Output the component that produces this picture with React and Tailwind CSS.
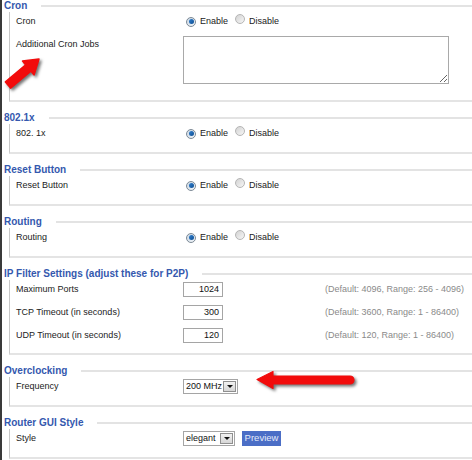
import React from "react";

// Router admin page: fieldset-style sections with legends, radios and inputs

const Radio = ({ checked }) =>
  checked ? (
    <span className="inline-flex h-[10px] w-[10px] shrink-0 items-center justify-center rounded-full border border-[#7d8a96] bg-gradient-to-br from-[#c9d6e3] to-[#f4f7fa]">
      <span className="h-[5px] w-[5px] rounded-full bg-gradient-to-br from-[#2f7fd0] to-[#0f4f92]" />
    </span>
  ) : (
    <span className="inline-flex h-[10px] w-[10px] shrink-0 rounded-full border border-[#b5b5b5] bg-gradient-to-br from-[#d2d2d2] to-[#f7f7f7]" />
  );

const EnableDisable = () => (
  <div className="flex items-center">
    <span className="ml-[3px]">
      <Radio checked />
    </span>
    <span className="ml-[4px]">Enable</span>
    <span className="ml-[7px]">
      <Radio />
    </span>
    <span className="ml-[4px]">Disable</span>
  </div>
);

const Select = ({ value, className }) => (
  <div
    className={`flex h-[15px] items-center justify-between border border-[#a5a5a5] bg-white pl-[2px] pr-[1px] ${className}`}
  >
    <span className="leading-none text-[#111]">{value}</span>
    <span className="flex h-[11px] w-[13px] items-center justify-center border border-[#8f8f8f] bg-gradient-to-b from-[#f2f2f2] to-[#d6d6d6]">
      <span className="h-0 w-0 border-x-[3px] border-t-[3px] border-x-transparent border-t-[#111]" />
    </span>
  </div>
);

const NumInput = ({ value }) => (
  <div className="flex h-[15px] w-[40px] items-center justify-end border border-[#a5a5a5] bg-white pr-[3px] leading-none text-[#111]">
    {value}
  </div>
);

const Row = ({ label, children }) => (
  <div className="flex h-[16px] items-center">
    <span className="w-[173px] shrink-0 pl-[6px]">{label}</span>
    {children}
  </div>
);

const Section = ({ title, children, pad = "pb-[11px]" }) => (
  <div className="mb-[10px]">
    <div className="flex h-[12px] items-center">
      <span className="text-[10px] font-bold leading-none text-[#3458ae]">
        {title}
      </span>
      <div className="ml-[14px] h-[2px] flex-1 bg-[#e3e3e3]" />
    </div>
    <div
      className={`ml-[5px] flex flex-col gap-[7px] border-b-2 border-l border-b-[#e4e4e4] border-l-[#c8c8c8] pt-[1px] ${pad}`}
    >
      {children}
    </div>
  </div>
);

const ArrowUp = () => (
  <svg
    className="pointer-events-none absolute left-0 top-[50px] drop-shadow-[2px_2px_1.5px_rgba(0,0,0,0.55)]"
    width="50"
    height="45"
    viewBox="0 0 50 45"
  >
    <polygon
      points="37,9 32.1,24.9 28.9,21.1 8.6,38.1 3.4,31.9 23.7,14.9 20.5,11.1"
      fill="#f20c0c"
      stroke="#f20c0c"
      strokeWidth="1.5"
      strokeLinejoin="round"
    />
  </svg>
);

const ArrowLeft = () => (
  <svg
    className="pointer-events-none absolute left-[250px] top-[368px] drop-shadow-[2px_2px_1.5px_rgba(0,0,0,0.55)]"
    width="110"
    height="28"
    viewBox="0 0 110 28"
  >
    <path
      d="M5 11.5 L21 3.5 L21 8 L98 8 A4 4 0 0 1 98 16 L21 16 L21 20.5 Z"
      fill="#f20c0c"
      stroke="#f20c0c"
      strokeWidth="1.2"
      strokeLinejoin="round"
    />
  </svg>
);

const ipRows = [
  { label: "Maximum Ports", value: "1024", hint: "(Default: 4096, Range: 256 - 4096)" },
  { label: "TCP Timeout (in seconds)", value: "300", hint: "(Default: 3600, Range: 1 - 86400)" },
  { label: "UDP Timeout (in seconds)", value: "120", hint: "(Default: 120, Range: 1 - 86400)" },
];

export default function App() {
  return (
    <div className="relative h-[460px] overflow-hidden border-l-2 border-[#3a3a3a] bg-white pl-[2px] font-['Liberation_Sans',Arial,sans-serif] text-[9px] leading-[16px] text-[#222]">
      <Section title="Cron" pad="pb-[16px]">
        <Row label="Cron">
          <EnableDisable />
        </Row>
        <div className="flex items-start">
          <span className="w-[173px] shrink-0 pl-[6px]">Additional Cron Jobs</span>
          <textarea className="h-[48px] w-[266px] border border-[#a9a9a9] bg-white outline-none" />
        </div>
      </Section>

      <Section title="802.1x">
        <Row label="802. 1x">
          <EnableDisable />
        </Row>
      </Section>

      <Section title="Reset Button">
        <Row label="Reset Button">
          <EnableDisable />
        </Row>
      </Section>

      <Section title="Routing">
        <Row label="Routing">
          <EnableDisable />
        </Row>
      </Section>

      <Section title="IP Filter Settings (adjust these for P2P)" pad="pb-[10px]">
        {ipRows.map((r) => (
          <Row key={r.label} label={r.label}>
            <NumInput value={r.value} />
            <span className="ml-[102px] whitespace-nowrap text-[#8a8a8a]">
              {r.hint}
            </span>
          </Row>
        ))}
      </Section>

      <Section title="Overclocking">
        <Row label="Frequency">
          <Select value="200 MHz" className="w-[55px]" />
        </Row>
      </Section>

      <Section title="Router GUI Style">
        <Row label="Style">
          <Select value="elegant" className="w-[52px]" />
          <button className="ml-[7px] flex h-[15px] w-[39px] items-center justify-center bg-[#4b6ec6] text-[9.5px] leading-none text-[#e4eafa]">
            Preview
          </button>
        </Row>
      </Section>

      <ArrowUp />
      <ArrowLeft />
    </div>
  );
}
